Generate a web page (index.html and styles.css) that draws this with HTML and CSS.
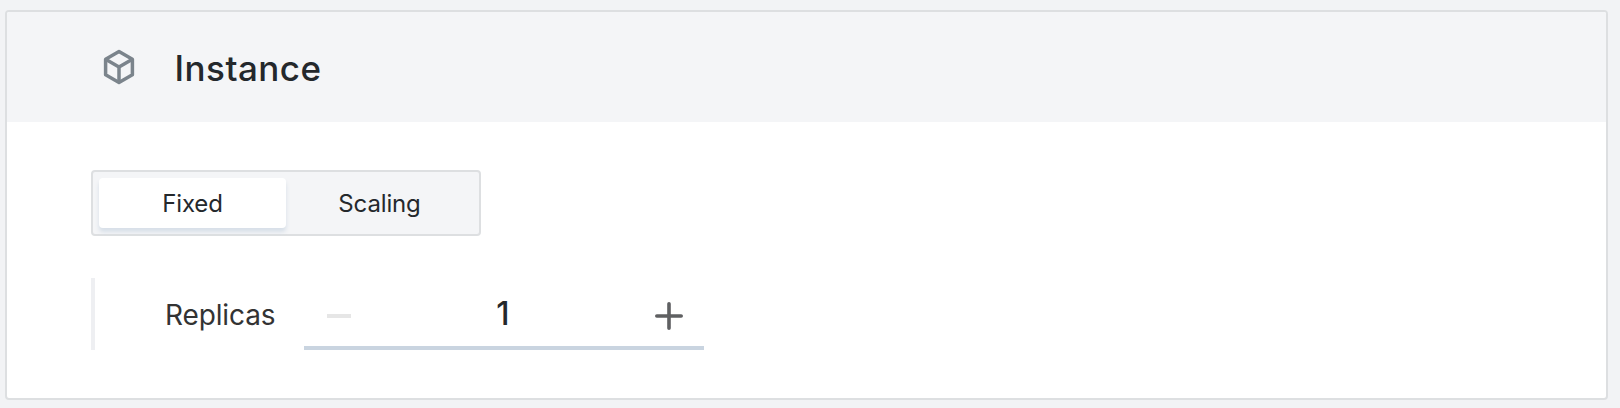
FILE: index.html
```html
<!DOCTYPE html>
<html lang="en">
<head>
<meta charset="utf-8">
<title>Instance</title>
<link rel="stylesheet" href="styles.css">
</head>
<body>
<section class="card">
  <header class="card-header">
    <svg class="cube" width="34" height="36" viewBox="0 0 34 36" fill="none" stroke="#7b848c" stroke-width="3.5" stroke-linejoin="round">
      <path d="M17 2.6 30.4 10.2V25.8L17 33.4 3.6 25.8V10.2Z"/>
      <path d="M3.6 10.2 17 17.9 30.4 10.2M17 17.9V33.4"/>
    </svg>
    <h2 class="title">Instance</h2>
  </header>
  <div class="card-body">
    <div class="segment">
      <button class="option option-active">Fixed</button>
      <button class="option">Scaling</button>
    </div>
    <div class="replicas">
      <span class="label">Replicas</span>
      <div class="stepper">
        <span class="minus"></span>
        <span class="value">1</span>
        <svg class="plus" width="28" height="28" viewBox="0 0 28 28" stroke="#5f6062" stroke-width="3.6" stroke-linecap="round">
          <path d="M14 1.8V26.2M1.8 14H26.2"/>
        </svg>
      </div>
    </div>
  </div>
</section>
</body>
</html>
```
FILE: styles.css
```css
* { box-sizing: border-box; }
body {
  margin: 0;
  padding: 10px 12px 8px 5px;
  height: 408px;
  background: #f2f3f5;
  font-family: Inter, "Liberation Sans", sans-serif;
  color: #24282c;
  overflow: hidden;
}
.card {
  height: 390px;
  border: 2px solid #dddfe1;
  border-radius: 4px;
  background: #fff;
  overflow: hidden;
}
.card-header {
  display: flex;
  align-items: center;
  height: 110px;
  padding-left: 95px;
  background: #f4f5f7;
}
.title {
  margin: 1px 0 0 38.6px;
  font-size: 35px;
  line-height: 44px;
  font-weight: 500;
  letter-spacing: 0.45px;
}
.card-body { padding: 48px 0 0 84px; }
.segment {
  display: flex;
  width: 390px;
  height: 66px;
  padding: 6px;
  border: 2px solid #dddfe1;
  border-radius: 4px;
  background: #f4f5f7;
}
.option {
  flex: 1;
  height: 50px;
  padding: 2px 0 0;
  border: 0;
  border-radius: 4px;
  background: none;
  font: 400 24px/48px Inter, "Liberation Sans", sans-serif;
  letter-spacing: -0.15px;
  color: #24282c;
}
.option-active {
  background: #fff;
  box-shadow: 0 4px 4px #d7dfe8;
}
.replicas {
  display: flex;
  height: 72px;
  margin-top: 42px;
  padding-left: 70px;
  border-left: 4px solid #eeeff2;
}
.label {
  width: 139px;
  font-size: 28px;
  line-height: 75px;
  letter-spacing: -0.13px;
  color: #333;
}
.stepper {
  display: flex;
  align-items: center;
  justify-content: space-between;
  width: 400px;
  padding: 8px 21px 0 23px;
  border-bottom: 4px solid #c9d4e0;
}
.minus {
  width: 24px;
  height: 4px;
  background: #e6e6e6;
}
.value {
  margin-top: -4px;
  font-size: 32px;
  line-height: 40px;
  font-weight: 500;
}
```
